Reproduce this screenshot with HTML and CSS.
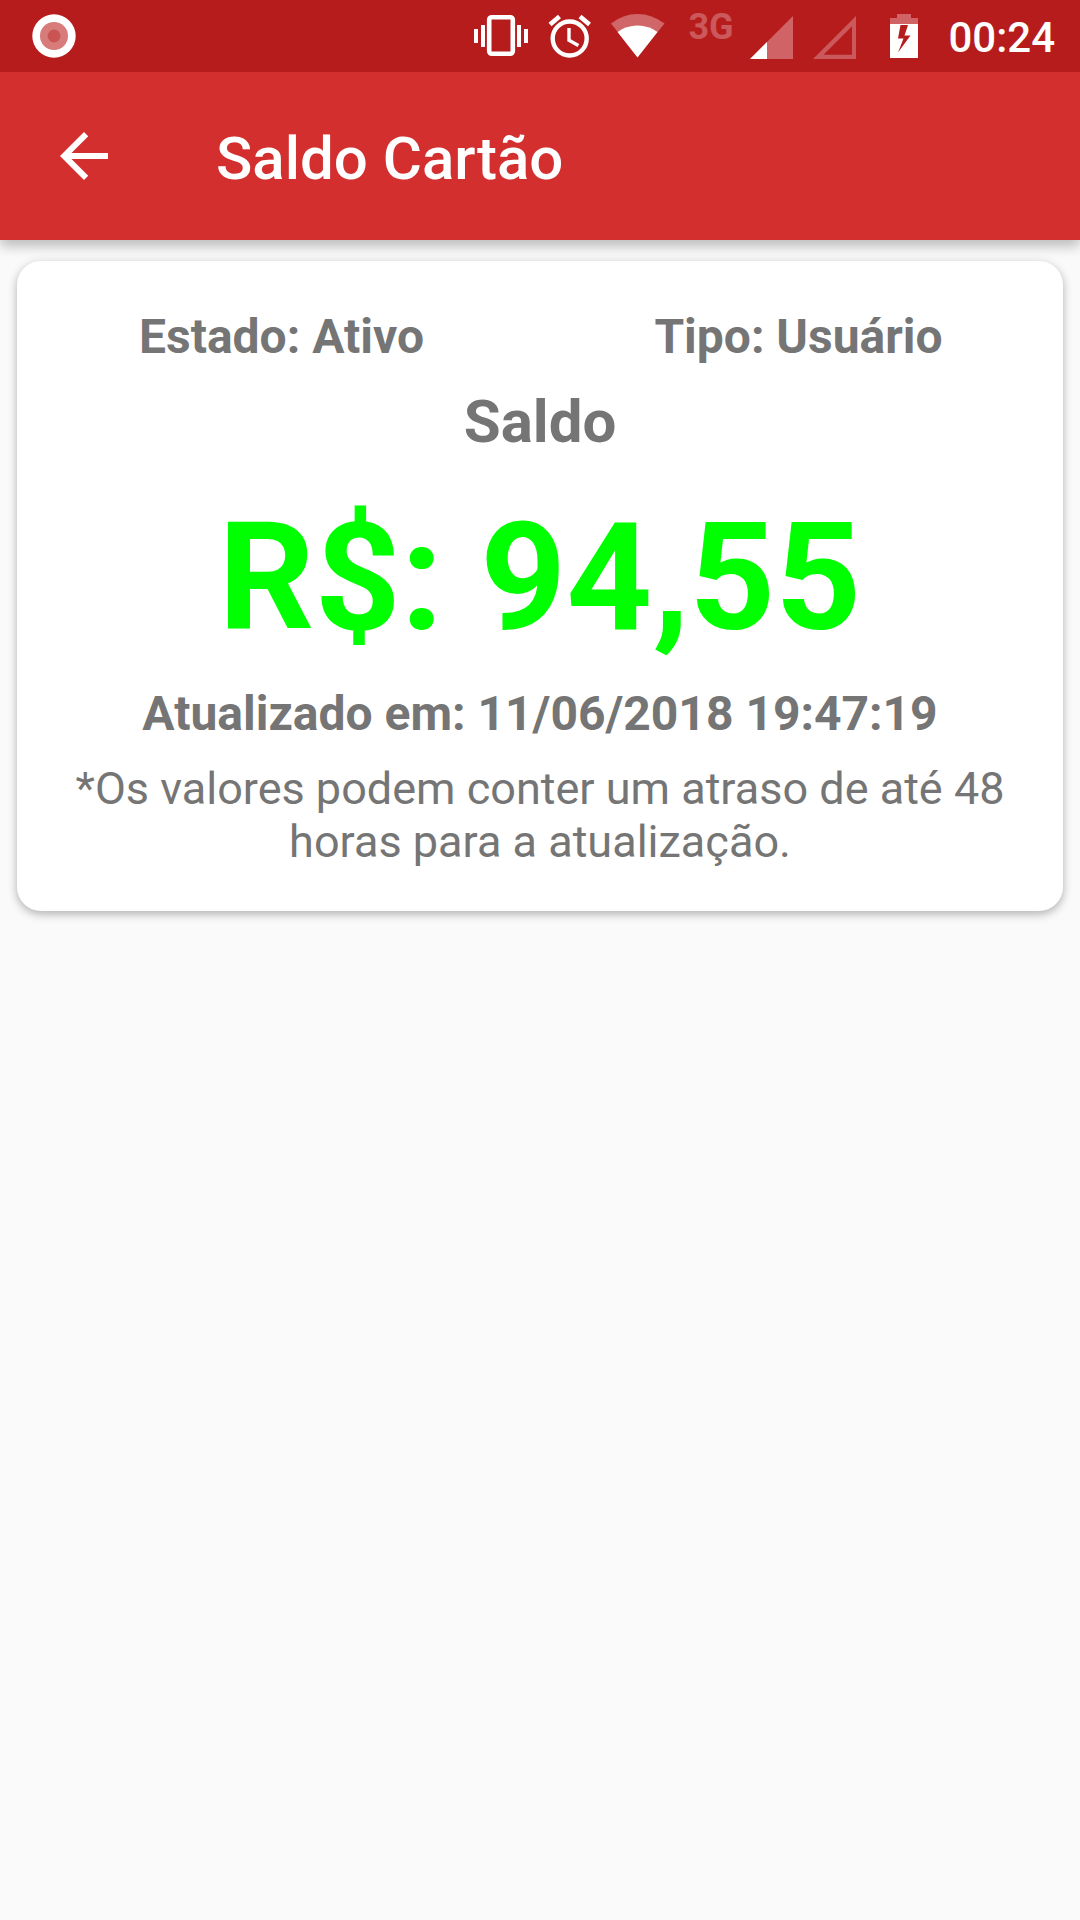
FILE: index.html
```html
<!DOCTYPE html>
<html lang="pt-BR">
<head>
  <meta charset="utf-8">
  <meta name="viewport" content="width=device-width, initial-scale=1">
  <title>Saldo Cartão</title>
  <link rel="stylesheet" href="styles.css">
</head>
<body>
  <div class="status-bar">
    <svg class="icon-record" viewBox="0 0 44 72" aria-hidden="true">
      <circle cx="22" cy="36" r="21.7" fill="#fff"/>
      <circle cx="22" cy="36" r="14" fill="#d87b7b"/>
      <circle cx="22" cy="36" r="6.4" fill="#c95454"/>
    </svg>
    <div class="status-icons">
      <svg width="56" height="72" viewBox="0 0 56 72" aria-hidden="true">
        <path fill="#fff" d="M0 29h4v14H0zM7 25h4v22H7zM43 25h4v22h-4zM50 29h4v14h-4z"/>
        <rect x="15.2" y="17.2" width="23.6" height="36.6" rx="2.5" fill="none" stroke="#fff" stroke-width="4.6"/>
      </svg>
      <svg width="48" height="72" viewBox="0 0 48 72" fill="none" stroke="#fff" aria-hidden="true">
        <circle cx="23.7" cy="38.5" r="17" stroke-width="4.4"/>
        <path d="M4 24.5 13.5 16.5M43.5 24.5 34 16.5" stroke-width="4.6"/>
        <path d="M23 28v12.3l9.4 5.2" stroke-width="3.4"/>
      </svg>
      <svg width="62" height="72" viewBox="0 0 62 72" aria-hidden="true">
        <path fill="#d16668" d="M1 23.5Q13 14 27.5 14T54.5 23.5L27.5 57z"/>
        <path fill="#fff" d="M7.5 32Q16 25.500 27.500 25.500T47.500 32L27.500 57.500z"/>
      </svg>
      <span class="network">3G</span>
      <svg width="46" height="72" viewBox="0 0 46 72" aria-hidden="true">
        <path fill="#cf6365" d="M0 59 43 16v43z"/>
        <path fill="#fff" d="M0 59 17 42v17z"/>
      </svg>
      <svg width="48" height="72" viewBox="0 0 48 72" aria-hidden="true">
        <path fill="#cb585a" fill-rule="evenodd" d="M1 59 44 16v43zM11.500 54.700H40V26.200z"/>
      </svg>
      <svg width="56" height="72" viewBox="0 0 56 72" aria-hidden="true">
        <path fill="#cf6365" d="M21 14h14v4h7v6H14v-6h7z"/>
        <path fill="#fff" fill-rule="evenodd" d="M14 24h28v34H14zM24.500 25 22 38.500h5.500L22 52.500 34.500 35.500h-6L32 25z"/>
      </svg>
      <time class="clock">00:24</time>
    </div>
  </div>

  <header class="toolbar">
    <button class="back" type="button" aria-label="Voltar">
      <svg width="72" height="72" viewBox="0 0 24 24" aria-hidden="true">
        <path fill="#fff" d="M20 11H7.830l5.590-5.590L12 4l-8 8 8 8 1.410-1.410L7.830 13H20v-2z"/>
      </svg>
    </button>
    <h1 class="title">Saldo Cartão</h1>
  </header>

  <main class="content">
    <section class="card">
      <div class="info">
        <p>Estado: Ativo</p>
        <p>Tipo: Usuário</p>
      </div>
      <h2 class="heading">Saldo</h2>
      <p class="amount">R$: 94,55</p>
      <p class="updated">Atualizado em: 11/06/2018 19:47:19</p>
      <p class="note">*Os valores podem conter um atraso de até 48 horas para a atualização.</p>
    </section>
  </main>
</body>
</html>
```

FILE: styles.css
```css
* {
  box-sizing: border-box;
}

body,
h1,
h2,
p {
  margin: 0;
}

body {
  min-height: 100vh;
  background: #fafafa;
  color: #757575;
  font-family: Roboto, "Liberation Sans", sans-serif;
}

svg {
  display: block;
}

.status-bar {
  position: relative;
  z-index: 1;
  display: flex;
  justify-content: space-between;
  height: 72px;
  padding: 0 25px 0 32px;
  background: #b71c1c;
  color: #fff;
}

.icon-record {
  width: 44px;
  height: 72px;
}

.status-icons {
  display: flex;
  gap: 16px;
}

.network {
  width: 46px;
  padding-top: 6px;
  color: #cb585a;
  font-size: 36px;
  font-weight: 700;
  line-height: 42px;
}

.clock {
  padding-top: 2px;
  font-size: 42px;
  font-weight: 500;
  line-height: 72px;
}

.toolbar {
  display: flex;
  align-items: center;
  gap: 96px;
  height: 168px;
  padding: 0 48px;
  background: #d32f2f;
  box-shadow: 0 6px 12px rgba(0, 0, 0, 0.26);
}

.back {
  padding: 0;
  border: 0;
  background: none;
  cursor: pointer;
}

.title {
  padding-top: 6px;
  color: #fff;
  font-size: 60px;
  font-weight: 500;
  line-height: 70px;
}

.content {
  padding: 21px 17px;
}

.card {
  display: flex;
  flex-direction: column;
  gap: 20px;
  padding: 48px 6px 43px;
  border-radius: 24px;
  background: #fff;
  box-shadow: 0 3px 10px rgba(0, 0, 0, 0.3);
  text-align: center;
}

.info {
  display: grid;
  grid-template-columns: 1fr 1fr;
}

.info,
.updated {
  font-size: 48px;
  font-weight: 700;
  line-height: 56px;
}

.heading {
  font-size: 60px;
  font-weight: 700;
  line-height: 74px;
}

.amount {
  padding-top: 11px;
  color: #0f0;
  font-size: 150px;
  font-weight: 700;
  line-height: 176px;
}

.note {
  padding: 0 42px;
  font-size: 45px;
  line-height: 53px;
}
```
